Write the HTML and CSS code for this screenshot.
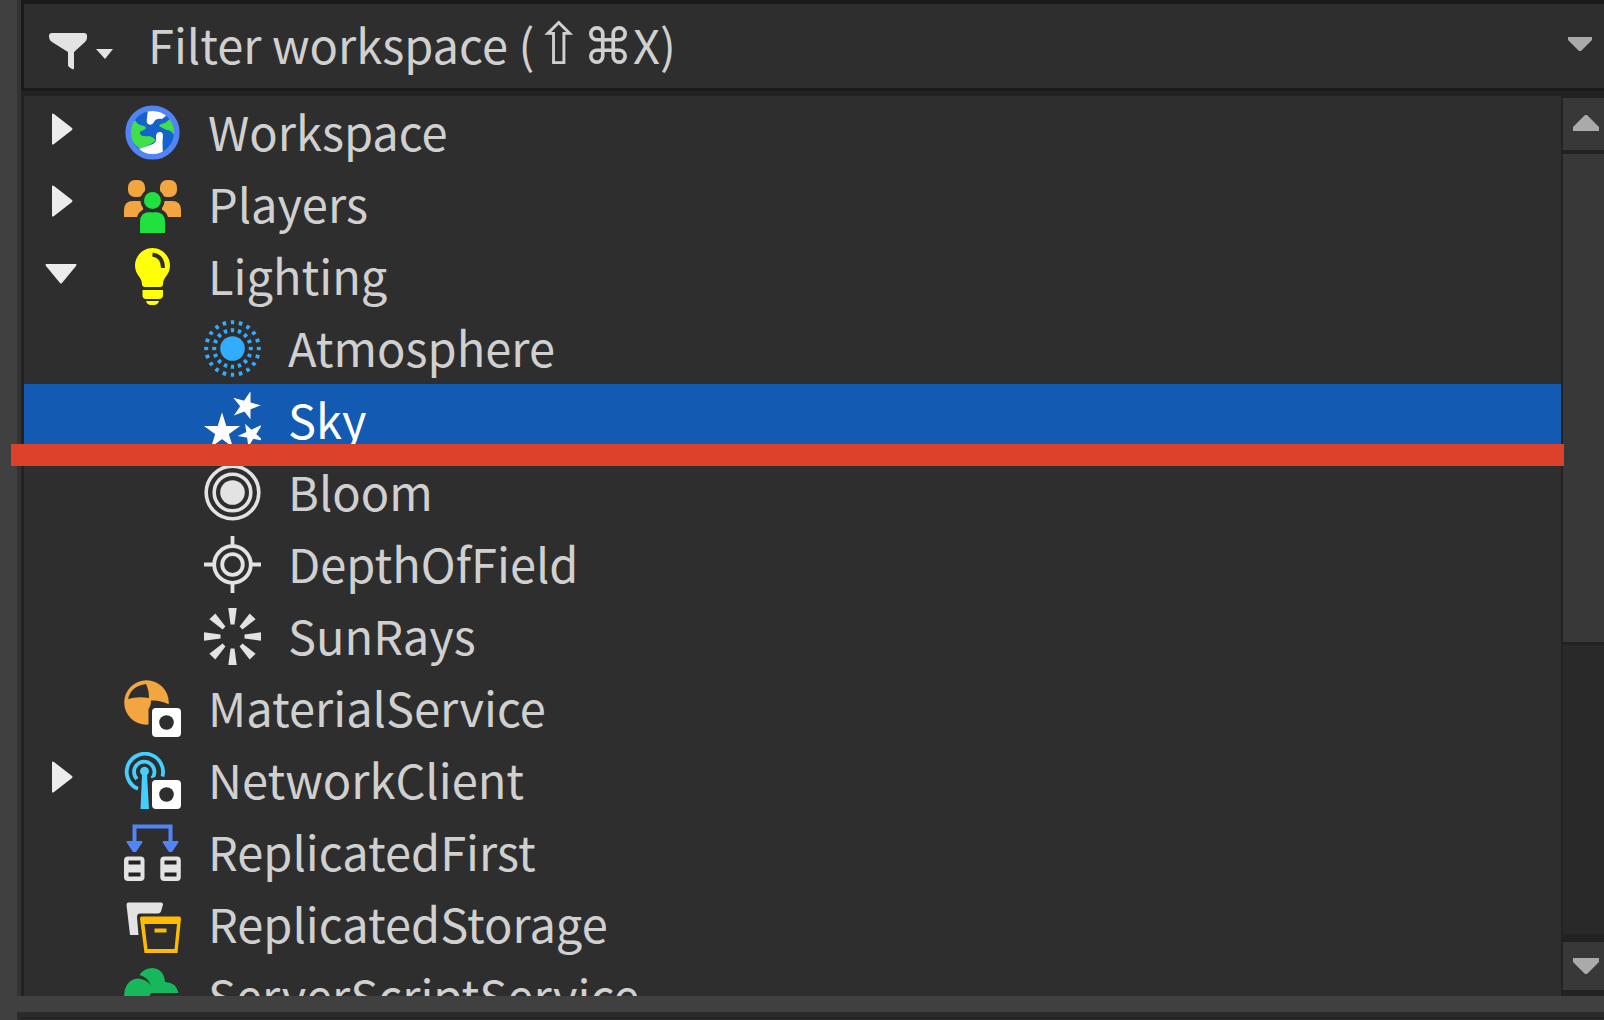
FILE: index.html
```
<!DOCTYPE html>
<html lang="en">
<head>
    <meta charset="UTF-8">
    <title>Explorer</title>
    <link rel="stylesheet" href="styles.css">
</head>
<body>
    <main class="explorer">
        <div class="filter-bar">
            <button class="filter-menu" aria-label="Filter options">
                <svg width="66" height="40" viewBox="0 0 66 40">
                    <path d="M4 3h32q3 0 3 3v2q0 2-2 4L26 22v16q0 2-2 1l-3-2q-1-1-1-2V22L4 12Q1 10 1 7V6q0-3 3-3z"/>
                    <path d="M48 19h17l-8 10z"/>
                </svg>
            </button>
            <div class="filter-field">
                <input class="filter-input" id="filter" type="text" placeholder=" ">
                <label class="filter-hint" for="filter">Filter workspace (<span class="key-shift">⇧</span><span class="key-cmd">⌘</span>X)</label>
            </div>
            <button class="filter-history" aria-label="Filter history">
                <svg width="24" height="14" viewBox="0 0 24 14"><path d="M0 0h24v3L13 14h-2L0 3z"/></svg>
            </button>
        </div>

        <div class="tree-area">
            <ul class="tree">
                <li class="row">
                    <button class="toggle" aria-label="Expand Workspace"><svg width="32" height="32" viewBox="0 0 32 32"><path d="M7 1q0-1 2 0l18 14q1 1 0 2L9 31q-2 1-2 0z"/></svg></button>
                    <svg class="icon" viewBox="0 0 57 57">
                        <circle cx="28.5" cy="28.5" r="24.5" fill="#1463cc"/>
                        <path fill="#fff" d="M24 5Q34 3 43 11L38 15Q32 14 30 18Q28 22 24 20Q22 18 23 14Z"/>
                        <path fill="#3fe04a" d="M11 16Q13 21 20 22Q24 24 20 26Q15 27 16 30Q18 33 25 32Q32 34 31 37Q28 40 16 45Q6 38 6 28Q6 21 11 16Z"/>
                        <path fill="#3fe04a" d="M35 22Q36 20 41 19L46 15Q52 23 51 33Q48 26 43 26Q40 25 35 22Z"/>
                        <path fill="#fff" d="M15 45L29 40Q33 38 32 33Q32 28 36 28Q39 28 39 32Q38 38 39 49Q26 55 15 45Z"/>
                        <circle cx="28.5" cy="28.5" r="24.3" fill="none" stroke="#5185f5" stroke-width="5.6"/>
                    </svg>
                    <span class="label">Workspace</span>
                </li>
                <li class="row">
                    <button class="toggle" aria-label="Expand Players"><svg width="32" height="32" viewBox="0 0 32 32"><path d="M7 1q0-1 2 0l18 14q1 1 0 2L9 31q-2 1-2 0z"/></svg></button>
                    <svg class="icon" viewBox="0 0 57 57">
                        <g fill="#f3a540">
                            <rect x="4" y="4" width="17" height="17" rx="7"/>
                            <rect x="36" y="4" width="17" height="17" rx="7"/>
                            <path d="M0 41v-7q0-9 9-9h10v9l-4 7zM57 41v-7q0-9-9-9H38v9l4 7z"/>
                        </g>
                        <g fill="#20e13f" stroke="#2e2e2e" stroke-width="7" paint-order="stroke">
                            <path d="M16 57V46q0-10 10-10h5q10 0 10 10v11z"/>
                            <circle cx="28.5" cy="24.5" r="8.5"/>
                        </g>
                    </svg>
                    <span class="label">Players</span>
                </li>
                <li class="row">
                    <button class="toggle" aria-label="Collapse Lighting"><svg width="32" height="32" viewBox="0 0 32 32"><path d="M1 7h30q1 0 0 2L17 26q-1 1-2 0L1 9q-1-2 0-2z"/></svg></button>
                    <svg class="icon" viewBox="0 0 57 57">
                        <g fill="#ffff0a">
                            <path d="M28.500 0C38 0 46 8 46 17.500C46 27 39 29 39 36Q39 39 36 39H21Q18 39 18 36C18 29 11 27 11 17.500C11 8 19 0 28.500 0Z"/>
                            <path d="M18.500 42H39v5q0 4-4 4H22q-3.500 0-3.500-4zM22 53h13q-1 4-5 4h-3q-4 0-5-4z"/>
                        </g>
                        <path d="M28.500 6.500Q39 8 39 20" fill="none" stroke="#2e2e2e" stroke-width="4"/>
                    </svg>
                    <span class="label">Lighting</span>
                </li>
                <li class="row child">
                    <svg class="icon" viewBox="0 0 57 57">
                        <circle cx="28.5" cy="28.5" r="12.3" fill="#32acff"/>
                        <g fill="none" stroke="#32acff" stroke-width="4">
                            <circle cx="28.5" cy="28.5" r="18.3" pathLength="160" stroke-dasharray="4.8 5.2" stroke-dashoffset="2.4"/>
                            <circle cx="28.5" cy="28.5" r="26.3" pathLength="200" stroke-dasharray="4.2 5.8" stroke-dashoffset="2.1"/>
                        </g>
                    </svg>
                    <span class="label">Atmosphere</span>
                </li>
                <li class="row child selected">
                    <svg class="icon" viewBox="0 0 57 57" fill="#fff" stroke="#fff" stroke-width="2">
                        <path d="M18 23.500L27 52.500L3 35H33L9 52.500Z"/>
                        <path d="M45.500 2.500L45.500 24.500L32 7.500L53.500 13.500L32.500 21.500Z"/>
                        <path d="M55.500 35L37 43.500L56 47L42.500 34.500L45 52Z"/>
                    </svg>
                    <span class="label">Sky</span>
                </li>
                <li class="row child">
                    <svg class="icon" viewBox="0 0 57 57">
                        <circle cx="28.5" cy="28.5" r="12.3" fill="#e3e3e3"/>
                        <g fill="none" stroke="#e3e3e3" stroke-width="3.6">
                            <circle cx="28.5" cy="28.5" r="18.3"/>
                            <circle cx="28.5" cy="28.5" r="26.3"/>
                        </g>
                    </svg>
                    <span class="label">Bloom</span>
                </li>
                <li class="row child">
                    <svg class="icon" viewBox="0 0 57 57" fill="none" stroke="#e3e3e3" stroke-width="3.8">
                        <circle cx="28.5" cy="28.5" r="10.3"/>
                        <circle cx="28.5" cy="28.5" r="18.3"/>
                        <path d="M28.500 0v9M28.500 48v9M0 28.500h9M48 28.500h9"/>
                    </svg>
                    <span class="label">DepthOfField</span>
                </li>
                <li class="row child">
                    <svg class="icon" viewBox="0 0 57 57" fill="#e3e3e3">
                        <path id="ray" d="M24.300 0h8.400l-2.200 16.500h-4z"/>
                        <use href="#ray" transform="rotate(45 28.5 28.5)"/>
                        <use href="#ray" transform="rotate(90 28.5 28.5)"/>
                        <use href="#ray" transform="rotate(135 28.5 28.5)"/>
                        <use href="#ray" transform="rotate(180 28.5 28.5)"/>
                        <use href="#ray" transform="rotate(225 28.5 28.5)"/>
                        <use href="#ray" transform="rotate(270 28.5 28.5)"/>
                        <use href="#ray" transform="rotate(315 28.5 28.5)"/>
                    </svg>
                    <span class="label">SunRays</span>
                </li>
                <li class="row">
                    <svg class="icon" viewBox="0 0 57 57">
                        <circle cx="22.5" cy="22.5" r="22.3" fill="#f3a540"/>
                        <path fill="#2e2e2e" d="M4 19Q7 6 22 4Q25 10 25 18Q14 16 4 19ZM27 20.500Q37 20 46 25V46H24.500V29Q27 26 27 20.500Z"/>
                        <rect x="28" y="28" width="29" height="29" rx="4" fill="#fff"/>
                        <circle cx="42.5" cy="42.5" r="7.3" fill="#2e2e2e"/>
                    </svg>
                    <span class="label">MaterialService</span>
                </li>
                <li class="row">
                    <button class="toggle" aria-label="Expand NetworkClient"><svg width="32" height="32" viewBox="0 0 32 32"><path d="M7 1q0-1 2 0l18 14q1 1 0 2L9 31q-2 1-2 0z"/></svg></button>
                    <svg class="icon" viewBox="0 0 57 57">
                        <g fill="none" stroke="#45cfff" stroke-width="3.8">
                            <path d="M14 36.800A18.200 18.200 0 1 1 38.500 24.500"/>
                            <path d="M13 27A10.200 10.200 0 1 1 28 26.500"/>
                        </g>
                        <path fill="#45cfff" d="M16.500 57l1.500-34a4.500 4.500 0 1 1 5 0l2 34z"/>
                        <rect x="28" y="28" width="29" height="29" rx="4" fill="#fff" stroke="#2e2e2e" stroke-width="6" paint-order="stroke"/>
                        <circle cx="42.5" cy="42.5" r="7.3" fill="#2e2e2e"/>
                    </svg>
                    <span class="label">NetworkClient</span>
                </li>
                <li class="row">
                    <svg class="icon" viewBox="0 0 57 57">
                        <path d="M10.500 18V2.500h36V18" fill="none" stroke="#5185f5" stroke-width="4"/>
                        <path fill="#5185f5" d="M3 17h15q1 1 0 2l-6 9h-3l-6-9q-1-1 0-2zM39 17h15q1 1 0 2l-6 9h-3l-6-9q-1-1 0-2z"/>
                        <g fill="#e3e3e3">
                            <rect y="32.5" width="20.5" height="24.5" rx="4"/>
                            <rect x="36.3" y="32.5" width="20.5" height="24.5" rx="4"/>
                        </g>
                        <path fill="#222" d="M4.500 36.500h12v4h-12zM4.500 48.500h12v4h-12zM40.500 36.500h12v4h-12zM40.500 48.500h12v4h-12z"/>
                    </svg>
                    <span class="label">ReplicatedFirst</span>
                </li>
                <li class="row">
                    <svg class="icon" viewBox="0 0 57 57">
                        <path fill="#e3e3e3" d="M4 6.500h33q2 0 2 2l-2 7q-1 2-3 2H16q-3 0-3 4l1.500 17.500H6L2.500 9q0-2.500 1.500-2.500z"/>
                        <path fill="#ffbb00" fill-rule="evenodd" d="M18 20.500h37q2 0 2 2L53.500 57H20.500L16 22.500q0-2 2-2zM20.500 28L23.500 53H50.500L53 28z"/>
                        <path fill="#ffbb00" d="M30.500 32.500h12v4h-12z"/>
                    </svg>
                    <span class="label">ReplicatedStorage</span>
                </li>
                <li class="row">
                    <svg class="icon" viewBox="0 0 57 57">
                        <path fill="#17b85c" d="M0 30Q0 12 14 10.500Q23 11 27 18Q24 9 15.500 7Q20 0 28.500 0Q40 1 41 14Q52 14 54.500 25H28Q26 25 25 30V40H6Q0 38 0 30Z"/>
                    </svg>
                    <span class="label">ServerScriptService</span>
                </li>
            </ul>

            <div class="scrollbar">
                <button class="scroll-step" aria-label="Scroll up">
                    <svg width="26" height="16" viewBox="0 0 26 16"><path d="M12 0h2l12 12v4H0v-4z"/></svg>
                </button>
                <div class="scroll-track"><div class="scroll-thumb"></div></div>
                <button class="scroll-step" aria-label="Scroll down">
                    <svg width="26" height="16" viewBox="0 0 26 16"><path d="M0 0h26v4L14 16h-2L0 4z"/></svg>
                </button>
            </div>
        </div>
        <div class="underline-mark"></div>
    </main>
    <div class="next-panel"></div>
</body>
</html>
```

FILE: styles.css
```
:root {
    --frame: #404040;
    --panel: #2e2e2e;
    --edge: #222222;
    --edge-dark: #1a1a1a;
    --button: #383838;
    --text: #d0d0d0;
    --selected: #125ab2;
}

* {
    box-sizing: border-box;
}

body {
    margin: 0;
    padding-left: 17px;
    height: 100vh;
    display: flex;
    flex-direction: column;
    gap: 16px;
    overflow: hidden;
    background: var(--frame);
    color: var(--text);
    font-family: "Noto Sans CJK SC", "Noto Sans", sans-serif;
    font-size: 47px;
}

button {
    display: flex;
    align-items: center;
    justify-content: center;
    padding: 0;
    border: 0;
    background: none;
    fill: #ececec;
}

.explorer {
    flex: 1;
    min-height: 0;
    display: flex;
    flex-direction: column;
    position: relative;
    padding-left: 4px;
    background: #333333;
}

/* Filter */
.filter-bar {
    flex: none;
    display: flex;
    align-items: center;
    height: 91px;
    padding: 0 12px 0 24px;
    border: solid var(--edge-dark);
    border-width: 4px 0 3px 3px;
    background: var(--panel);
}

.filter-menu {
    margin-top: 8px;
    fill: #e3e3e3;
}

.filter-field {
    flex: 1;
    position: relative;
    height: 84px;
    margin-left: 34px;
}

.filter-input {
    width: 100%;
    height: 100%;
    padding: 0;
    border: 0;
    outline: 0;
    background: none;
    color: var(--text);
    font: inherit;
}

/* hint sits over the empty field and goes away once something is typed */
.filter-hint {
    position: absolute;
    top: 0;
    left: 0;
    line-height: 80px;
    white-space: nowrap;
    pointer-events: none;
}

.filter-input:not(:placeholder-shown) + .filter-hint {
    display: none;
}

.key-shift,
.key-cmd {
    font-family: "DejaVu Sans", sans-serif;
    font-size: 50px;
    line-height: 1;
}

.key-shift {
    font-size: 58px;
}

.filter-history {
    margin-bottom: 4px;
    fill: #aaaaaa;
}

/* Tree */
.tree-area {
    flex: 1;
    min-height: 0;
    display: flex;
    border: solid var(--edge);
    border-width: 5px 0 0 3px;
    background: var(--panel);
}

.tree {
    flex: 1;
    margin: 0;
    padding: 0;
    overflow: hidden;
    list-style: none;
}

.row {
    display: flex;
    height: 72px;
    padding-left: 100px;
}

.row:has(.toggle) {
    padding-left: 21px;
}

.child {
    padding-left: 180px;
}

.toggle {
    width: 32px;
    height: 32px;
    margin: 17px 47px 0 0;
}

.icon {
    flex: none;
    width: 57px;
    height: 57px;
    margin-top: 8px;
}

.label {
    margin-left: 27px;
    line-height: 70px;
    white-space: nowrap;
}

.selected {
    background: var(--selected);
    color: #ffffff;
}

/* Scrollbar */
.scrollbar {
    display: flex;
    flex-direction: column;
    width: 43px;
    padding: 2px 0 6px 2px;
    background: var(--edge);
}

.scroll-step {
    flex: none;
    height: 52px;
    padding: 0 0 2px 5px;
    background: var(--button);
    fill: #aaaaaa;
}

.scroll-step:last-child {
    height: 48px;
    padding-bottom: 0;
}

.scroll-track {
    flex: 1;
    margin: 4px 0 8px;
    background: #292929;
}

.scroll-thumb {
    height: 63%;
    border-bottom: 3px solid var(--edge);
    background: var(--button);
}

/* Red line drawn across the list, under the selected row */
.underline-mark {
    position: absolute;
    top: 444px;
    left: -6px;
    right: 40px;
    height: 22px;
    background: #dc412c;
}

.next-panel {
    flex: none;
    height: 8px;
    background: linear-gradient(var(--edge), var(--edge)) 4px 5px / 100% 2px no-repeat #2b2b2b;
}
```
